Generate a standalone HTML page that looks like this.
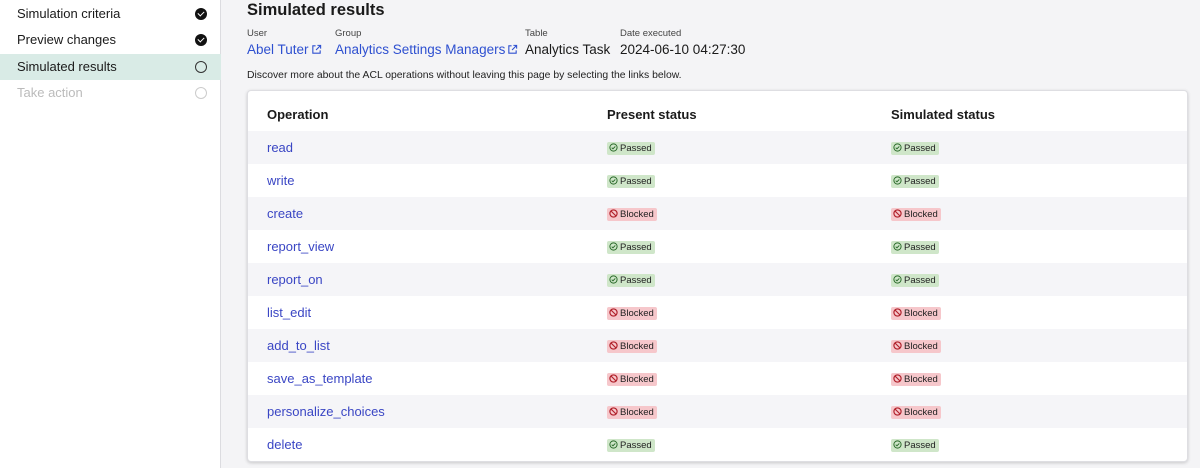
<!DOCTYPE html>
<html><head><style>
*{margin:0;padding:0;box-sizing:border-box}
body{width:1200px;height:468px;overflow:hidden;font-family:"Liberation Sans",sans-serif;background:#f4f4f6;position:relative;color:#1a1a1a}
.side{position:absolute;left:0;top:0;width:221px;height:468px;background:#fff;border-right:1px solid #dcdce0}
.step{position:absolute;left:0;width:221px;height:26px;font-size:13px;padding-left:17px;line-height:26px}
.step .ic{position:absolute;left:195px;top:7px;width:12px;height:12px;border-radius:50%}
.done .ic{background:#111}
.done .ic:after{content:"";position:absolute;left:3px;top:2.5px;width:5px;height:3px;border-left:1.6px solid #fff;border-bottom:1.6px solid #fff;transform:rotate(-45deg)}
.cur{background:#d9ebe6}
.cur .ic{border:1.3px solid #333}
.dis{color:#bbb}
.dis .ic{border:1.3px solid #ccc}
h1{position:absolute;left:247px;top:1px;font-size:16.5px;font-weight:bold;color:#1a1a1a}
.f{position:absolute;top:28px}
.f .l{font-size:9.5px;color:#444}
.f .v{font-size:13.5px;margin-top:3px;white-space:nowrap}
.lk{color:#2e50d0}
.ext{display:inline-block;width:11px;height:11px;vertical-align:-1px;margin-left:2px}
.disc{position:absolute;left:247px;top:70px;font-size:10.4px;color:#222}
.card{position:absolute;left:247px;top:90px;width:941px;height:372px;background:#fff;border:1px solid #dedee2;border-radius:4px;box-shadow:0 1px 3px rgba(0,0,0,.18);overflow:hidden}
.row{position:absolute;left:0;width:940px;height:33px}
.row.s{background:#f5f5f8}
.row div{position:absolute;top:0;line-height:33px}
.c1{left:19px;font-size:13px;color:#3a46c4}
.hd div{font-weight:bold;color:#1a1a1a;font-size:13px;line-height:47px}
.c2{left:359px}.c3{left:643px}
.b{display:inline-block;font-size:9.5px;line-height:13px;height:13px;padding:0 3px 0 2px;border-radius:2px;vertical-align:middle;color:#222;position:relative;top:1px}
.p{background:#cfe6c9}
.k{background:#f6c7cb}
.b svg{width:9px;height:9px;vertical-align:-1px;margin-right:2px}
</style></head><body>
<div class="side">
<div class="step done" style="top:1px">Simulation criteria<span class="ic"></span></div>
<div class="step done" style="top:27px">Preview changes<span class="ic"></span></div>
<div class="step cur" style="top:54px">Simulated results<span class="ic"></span></div>
<div class="step dis" style="top:80px">Take action<span class="ic"></span></div>
</div>
<h1>Simulated results</h1>
<div class="f" style="left:247px"><div class="l">User</div><div class="v lk">Abel Tuter<svg class="ext" viewBox="0 0 12 12" fill="none" stroke="#2e50d0" stroke-width="1.2"><path d="M5 2H2v8h8V7M7 1.5h3.5V5M10.5 1.5L5.5 6.5"/></svg></div></div>
<div class="f" style="left:335px"><div class="l">Group</div><div class="v lk">Analytics Settings Managers<svg class="ext" viewBox="0 0 12 12" fill="none" stroke="#2e50d0" stroke-width="1.2"><path d="M5 2H2v8h8V7M7 1.5h3.5V5M10.5 1.5L5.5 6.5"/></svg></div></div>
<div class="f" style="left:525px"><div class="l">Table</div><div class="v">Analytics Task</div></div>
<div class="f" style="left:620px"><div class="l">Date executed</div><div class="v">2024-06-10 04:27:30</div></div>
<div class="disc">Discover more about the ACL operations without leaving this page by selecting the links below.</div>
<div class="card">
<div class="row hd" style="top:0;height:40px"><div class="c1">Operation</div><div class="c2">Present status</div><div class="c3">Simulated status</div></div>
<div id="rows"></div>
</div>
<script>
var d=[["read",1],["write",1],["create",0],["report_view",1],["report_on",1],["list_edit",0],["add_to_list",0],["save_as_template",0],["personalize_choices",0],["delete",1]];
var P='<span class="b p"><svg viewBox="0 0 10 10" fill="none" stroke="#2a6a2a" stroke-width="1.1"><circle cx="5" cy="5" r="4"/><path d="M3 5.2l1.4 1.3L7 3.8"/></svg>Passed</span>';
var K='<span class="b k"><svg viewBox="0 0 10 10" fill="none" stroke="#b0202a" stroke-width="1.3"><circle cx="5" cy="5" r="4"/><path d="M2.2 2.2l5.6 5.6"/></svg>Blocked</span>';
var h='';d.forEach(function(r,i){var b=r[1]?P:K;h+='<div class="row'+(i%2?'':' s')+'" style="top:'+(40+i*33)+'px"><div class="c1">'+r[0]+'</div><div class="c2">'+b+'</div><div class="c3">'+b+'</div></div>';});
document.getElementById('rows').outerHTML=h;
</script>
</body></html>
